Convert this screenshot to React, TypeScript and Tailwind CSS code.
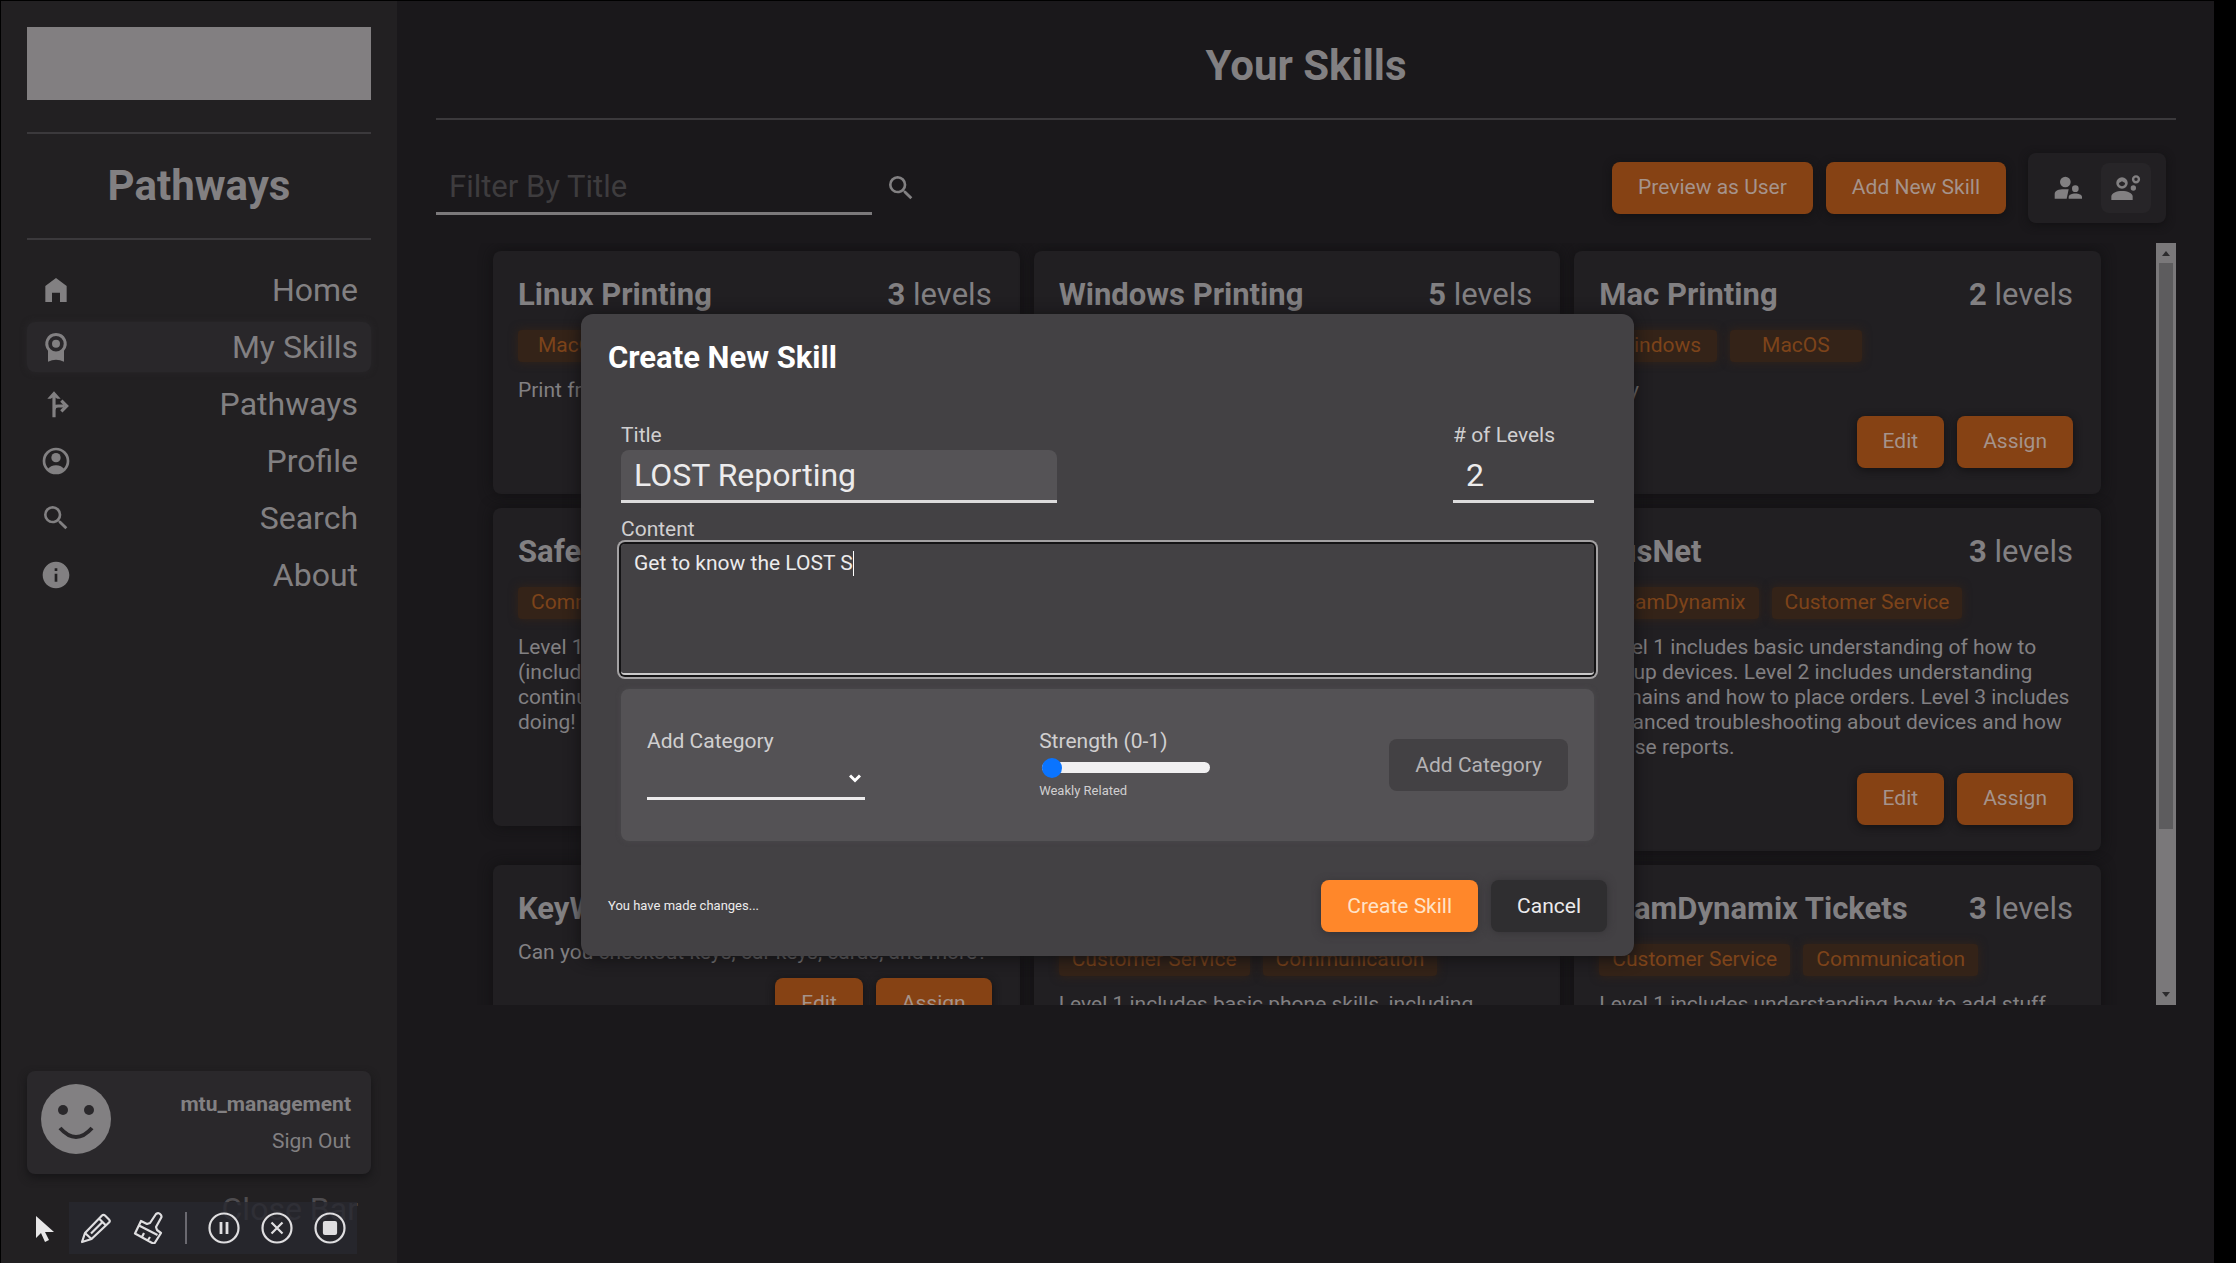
import { useId } from "react";
import type { ReactNode } from "react";
import { MdHomeFilled, MdInfo, MdSearch } from "react-icons/md";

type Tag = { name: string; className?: string };
type Skill = { title: string; levels: number; tags: Tag[]; text: string };

const skills: Skill[] = [
  {
    title: "Linux Printing",
    levels: 3,
    tags: [{ name: "MacOS", className: "px-5" }],
    text: "Print from Linux",
  },
  { title: "Windows Printing", levels: 5, tags: [{ name: "Windows" }], text: "Print from Windows" },
  {
    title: "Mac Printing",
    levels: 2,
    tags: [
      { name: "Windows", className: "px-4" },
      { name: "MacOS", className: "px-8" },
    ],
    text: "Tray",
  },
  {
    title: "Safety",
    levels: 3,
    tags: [{ name: "Communication" }],
    text: "Level 1 includes basic understanding of safety (including reporting issues). Level 2 includes continued practice. Keep up everything you are doing!",
  },
  {
    title: "Phones",
    levels: 3,
    tags: [{ name: "Customer Service" }],
    text: "Level 1 includes basic phone skills.",
  },
  {
    title: "BusNet",
    levels: 3,
    tags: [{ name: "TeamDynamix" }, { name: "Customer Service" }],
    text: "Level 1 includes basic understanding of how to set\u00a0up devices. Level 2 includes understanding domains and how to place orders. Level 3 includes advanced troubleshooting about devices and how to use reports.",
  },
  { title: "KeyWatcher", levels: 3, tags: [], text: "Can you checkout keys, car keys, cards, and more?" },
  {
    title: "Phone Skills",
    levels: 3,
    tags: [{ name: "Customer Service" }, { name: "Communication" }],
    text: "Level 1 includes basic phone skills, including answering and transferring calls.",
  },
  {
    title: "TeamDynamix Tickets",
    levels: 3,
    tags: [{ name: "Customer Service" }, { name: "Communication" }],
    text: "Level 1 includes understanding how to add stuff throughout tickets and how to resolve them.",
  },
];

function BadgeIcon() {
  return (
    <svg viewBox="0 0 24 24" className="size-8" fill="currentColor" aria-hidden="true">
      <path
        fillRule="evenodd"
        d="M12 1.500a8 8 0 0 0-6 13.300V23q3-1.500 6-1.500t6 1.500v-8.200A8 8 0 0 0 12 1.500zm0 2.200a5.800 5.800 0 1 1 0 11.600 5.800 5.800 0 0 1 0-11.600z"
      />
      <circle cx="12" cy="9.500" r="3" />
    </svg>
  );
}

function ForkIcon() {
  return (
    <svg viewBox="0 0 24 24" className="size-8" fill="none" stroke="currentColor" strokeWidth="2.400" aria-hidden="true">
      <path d="M10.500 22V5M10.500 18v-1.500q0-3 3-3H18" />
      <path d="M16 9.500l4 4-4 4" />
      <path d="M10.500 2.500l5 5.500h-2.500L10.500 6.500 8 8H5.500z" fill="currentColor" stroke="none" />
    </svg>
  );
}

function AccountIcon() {
  return (
    <svg viewBox="0 0 24 24" className="size-8" aria-hidden="true">
      <circle cx="12" cy="12" r="9" fill="none" stroke="currentColor" strokeWidth="2" />
      <circle cx="12" cy="9.500" r="3.500" fill="currentColor" />
      <path d="M5.500 18.500c1.500-2.300 4-3.300 6.500-3.300s5 1 6.500 3.300A9.500 9.500 0 0 1 12 21.500a9.500 9.500 0 0 1-6.500-3z" fill="currentColor" />
    </svg>
  );
}

function UsersIcon() {
  return (
    <svg viewBox="0 0 24 24" className="size-8" fill="currentColor" aria-hidden="true">
      <circle cx="10" cy="7.500" r="4" />
      <path d="M2 20v-3.500C2 14 5 13 9 13h3.500L11 20z" />
      <circle cx="17.500" cy="12.500" r="2.500" />
      <path d="M12.500 20v-1.200c0-1.700 2.500-2.600 5-2.600s5 .9 5 2.600V20z" />
    </svg>
  );
}

function ManagerIcon() {
  return (
    <svg viewBox="0 0 24 24" className="size-8" fill="currentColor" aria-hidden="true">
      <path d="M1 21v-2.600c0-2.700 4-4.200 8-4.200s8 1.500 8 4.200V21z" />
      <path fillRule="evenodd" d="M9 4a4.300 4.300 0 1 0 0 8.600A4.300 4.300 0 0 0 9 4zm-2.300 4.300L9 7l2.300 1.300a2.300 2.300 0 0 1-4.600 0z" />
      <circle cx="19.500" cy="5.500" r="2.200" fill="none" stroke="currentColor" strokeWidth="1.800" />
      <circle cx="17.500" cy="12" r="2" />
    </svg>
  );
}

function PrimaryButton({ children }: { children: ReactNode }) {
  return (
    <button
      type="button"
      className="h-[52px] rounded-lg bg-[#864214] px-[26px] text-[21px] text-[#a5938b] shadow-[0_2px_8px_#121113]"
    >
      {children}
    </button>
  );
}

function NavItem({ icon, label, active = false }: { icon: ReactNode; label: string; active?: boolean }) {
  return (
    <a
      href="#"
      className={
        active
          ? "flex h-[50px] items-center justify-between rounded-lg bg-[#29272a] px-[13px] shadow-[0_0_6px_#29272a]"
          : "flex h-[50px] items-center justify-between px-[13px]"
      }
    >
      {icon}
      <span>{label}</span>
    </a>
  );
}

function Sidebar() {
  return (
    <aside className="flex w-[396px] shrink-0 flex-col bg-[#222022] px-[26px] pt-[26px] text-[#828082]">
      <div className="h-[73px] bg-[#827f81]" />
      <div className="mt-8 border-y-2 border-[#3b393c] py-7 text-center">
        <h2 className="text-[42px] leading-[48px] font-bold">Pathways</h2>
      </div>
      <nav className="mt-[25px] flex flex-col gap-[7px] text-[32px]">
        <NavItem icon={<MdHomeFilled className="size-8" />} label="Home" />
        <NavItem icon={<BadgeIcon />} label="My Skills" active />
        <NavItem icon={<ForkIcon />} label="Pathways" />
        <NavItem icon={<AccountIcon />} label="Profile" />
        <NavItem icon={<MdSearch className="size-8" />} label="Search" />
        <NavItem icon={<MdInfo className="size-8" />} label="About" />
      </nav>
      <div className="mt-auto flex h-[103px] justify-between rounded-lg bg-[#2a282b] pt-[13px] pr-5 pl-[14px] shadow-[0_4px_8px_#161517]">
        <svg viewBox="0 0 70 70" className="size-[70px]" aria-hidden="true">
          <circle cx="35" cy="35" r="35" fill="#828082" />
          <circle cx="22" cy="26" r="5" fill="#2a282b" />
          <circle cx="48" cy="26" r="5" fill="#2a282b" />
          <path d="M19 44q16 18 32 0" fill="none" stroke="#2a282b" strokeWidth="4" />
        </svg>
        <div className="flex flex-col items-end gap-3 pt-2 text-[21px] leading-[25px]">
          <span className="font-bold">mtu_management</span>
          <button type="button">Sign Out</button>
        </div>
      </div>
      <button type="button" className="mt-[14px] mb-8 self-end pr-[13px] text-[32px] leading-[43px] text-[#4e4c4f]">
        Close Bar
      </button>
    </aside>
  );
}

function SkillCard({ skill }: { skill: Skill }) {
  return (
    <article className="flex flex-col gap-[13px] rounded-lg bg-[#211f22] py-[26px] pr-7 pl-[25px] shadow-[0_0_14px_#111012]">
      <div className="flex justify-between text-[31px] leading-9">
        <h3 className="font-bold">{skill.title}</h3>
        <p>
          <b>{skill.levels}</b> levels
        </p>
      </div>
      {skill.tags.length > 0 && (
        <ul className="flex h-[39px] items-center gap-[13px] text-[21px] text-[#7d431a]">
          {skill.tags.map((tag) => (
            <li
              key={tag.name}
              className={`flex h-8 items-center rounded bg-[#342318] shadow-[0_0_10px_#342318] ${tag.className ?? "px-[13px]"}`}
            >
              {tag.name}
            </li>
          ))}
        </ul>
      )}
      <p className="text-[21px] leading-[25px]">{skill.text}</p>
      <div className="flex justify-end gap-[13px]">
        <PrimaryButton>Edit</PrimaryButton>
        <PrimaryButton>Assign</PrimaryButton>
      </div>
    </article>
  );
}

function Scrollbar() {
  return (
    <div className="flex w-5 shrink-0 flex-col items-center bg-[#7a787a] text-[#2c2b2d]">
      <svg viewBox="0 0 20 20" className="size-5" fill="currentColor" aria-hidden="true">
        <path d="M6 13l4-5 4 5z" />
      </svg>
      <div className="w-[14px] flex-1 bg-[#5d5c5e]" />
      <div className="h-[156px]" />
      <svg viewBox="0 0 20 20" className="size-5" fill="currentColor" aria-hidden="true">
        <path d="M6 7l4 5 4-5z" />
      </svg>
    </div>
  );
}

function SkillsPage() {
  return (
    <main className="flex min-w-0 flex-1 flex-col bg-[#1a181b] pr-[38px] pl-[39px] text-[#828082]">
      <h1 className="mt-[41px] text-center text-[42px] leading-[48px] font-bold">Your Skills</h1>
      <hr className="mt-7 border-t-2 border-[#3b393c]" />
      <div className="mt-[33px] flex h-[70px] items-center">
        <input
          aria-label="Filter By Title"
          placeholder="Filter By Title"
          className="h-[54px] w-[436px] border-b-[3px] border-[#7b797b] px-[13px] text-[31px] outline-none placeholder:text-[#3e3c3e]"
        />
        <button type="button" aria-label="Search" className="ml-[13px]">
          <MdSearch className="size-8" />
        </button>
        <div className="ml-auto flex items-center gap-[13px]">
          <PrimaryButton>Preview as User</PrimaryButton>
          <PrimaryButton>Add New Skill</PrimaryButton>
          <div className="mr-[10px] ml-[9px] flex h-[70px] items-center gap-2 rounded-lg bg-[#211f22] px-[15px] shadow-[0_2px_8px_#121113]">
            <button type="button" aria-label="Users" className="grid size-[50px] place-items-center">
              <UsersIcon />
            </button>
            <button type="button" aria-label="Managers" className="grid size-[50px] place-items-center rounded-lg bg-[#272528]">
              <ManagerIcon />
            </button>
          </div>
        </div>
      </div>
      <div className="mt-5 flex h-[762px]">
        <div className="grid flex-1 grid-cols-3 content-start items-start gap-[14px] overflow-hidden pt-2 pr-[55px] pl-[57px]">
          {skills.map((skill) => (
            <SkillCard key={skill.title} skill={skill} />
          ))}
        </div>
        <Scrollbar />
      </div>
    </main>
  );
}

function CreateSkillDialog() {
  const id = useId();
  return (
    <div
      role="dialog"
      aria-labelledby={`${id}-heading`}
      className="absolute top-[313px] left-[580px] w-[1053px] rounded-xl bg-[#434144] px-[27px] pt-[26px] pb-6 text-[21px] leading-[25px] text-[#d0cfd0] shadow-[0_2px_16px_#111012]"
    >
      <h2 id={`${id}-heading`} className="text-[31px] leading-9 font-bold text-white">
        Create New Skill
      </h2>
      <div className="mt-[47px] px-[13px]">
        <div className="flex justify-between">
          <div className="flex flex-col gap-[2px]">
            <label htmlFor={`${id}-title`}>Title</label>
            <input
              id={`${id}-title`}
              defaultValue="LOST Reporting"
              className="h-[53px] w-[436px] rounded-t-lg border-b-[3px] border-[#dddcdd] bg-[#555356] px-[13px] text-[32px] text-[#ecebec] outline-none"
            />
          </div>
          <div className="flex flex-col gap-[2px]">
            <label htmlFor={`${id}-levels`}># of Levels</label>
            <input
              id={`${id}-levels`}
              defaultValue="2"
              className="h-[53px] w-[141px] border-b-[3px] border-[#dddcdd] px-[13px] text-[32px] text-[#ecebec] outline-none"
            />
          </div>
        </div>
        <label htmlFor={`${id}-content`} className="mt-[14px] block">
          Content
        </label>
        <div className="relative mt-[2px]">
          <textarea
            id={`${id}-content`}
            defaultValue="Get to know the LOST S"
            className="block h-[131px] w-full resize-none rounded border-b-2 border-[#c9c8c9] px-[13px] py-[7px] text-[#ecebec] shadow-[0_0_0_2px_#141315,0_0_0_4px_#a3a1a3] outline-none"
          />
          <span className="absolute top-[7px] left-[232px] h-[25px] w-px bg-white" />
        </div>
        <div className="mt-[14px] flex h-[152px] items-start justify-between rounded-lg bg-[#545255] px-[26px] pt-10 shadow-[0_0_5px_#4b494c]">
          <div className="flex w-[218px] flex-col">
            <label htmlFor={`${id}-category`}>Add Category</label>
            <div className="relative">
              <select
                id={`${id}-category`}
                className="h-[46px] w-full appearance-none border-b-[3px] border-[#ecebec] outline-none"
              >
                <option value="" />
                <option>Customer Service</option>
              </select>
              <svg
                viewBox="0 0 12 9"
                className="pointer-events-none absolute top-5 right-1 h-[9px] w-3"
                fill="none"
                stroke="white"
                strokeWidth="3"
                aria-hidden="true"
              >
                <path d="M1 1.500l5 5 5-5" />
              </svg>
            </div>
          </div>
          <div className="flex w-[176px] flex-col">
            <label htmlFor={`${id}-strength`}>Strength (0-1)</label>
            <input
              id={`${id}-strength`}
              type="range"
              min="0"
              max="1"
              step="0.1"
              defaultValue="0"
              className="mt-2 ml-[3px] h-[11px] w-[168px] appearance-none rounded-full bg-[#f1f0f1] [&::-webkit-slider-thumb]:size-5 [&::-webkit-slider-thumb]:appearance-none [&::-webkit-slider-thumb]:rounded-full [&::-webkit-slider-thumb]:bg-[#0a74ff]"
            />
            <span className="mt-[10px] text-[13px] leading-4">Weakly Related</span>
          </div>
          <button type="button" className="mt-[10px] h-[52px] rounded-lg bg-[#434144] px-[26px] text-[#b5b3b5]">
            Add Category
          </button>
        </div>
      </div>
      <div className="mt-[39px] flex items-center">
        <p className="mr-auto text-[13px] leading-4 text-[#ecebec]">You have made changes...</p>
        <button
          type="button"
          className="h-[52px] rounded-lg bg-[#ff872a] px-[26px] text-[#ffe3c8] shadow-[0_2px_8px_#343235]"
        >
          Create Skill
        </button>
        <button
          type="button"
          className="ml-[13px] h-[52px] rounded-lg bg-[#2f2e30] px-[26px] text-[#ecebec] shadow-[0_0_8px_#343235]"
        >
          Cancel
        </button>
      </div>
    </div>
  );
}

function RecorderBar() {
  return (
    <div className="absolute bottom-[9px] left-[68px] flex h-[52px] w-[288px] items-center bg-[#28282f]/80 pl-[11px] text-[#dfdee0]">
      <button type="button" aria-label="Draw">
        <svg viewBox="0 0 32 32" className="size-8" fill="none" stroke="currentColor" strokeWidth="2.200" strokeLinejoin="round">
          <path d="M2 30l3-9L22 3.500q1.500-1.500 3 0l4 4q1.500 1.500 0 3L11.500 27zM5 21l6.500 6M19 6.500l7 7M23 9.500L11 21.500" />
        </svg>
      </button>
      <button type="button" aria-label="Clear" className="ml-[21px]">
        <svg viewBox="0 0 32 32" className="size-8" fill="none" stroke="currentColor" strokeWidth="2.200" strokeLinejoin="round">
          <path d="M8 9l6 3 3-1 6-9q3-2 5 1 1 2 0 3l-5 9 1 3 4 3-7 11L2 21.500zM6 13.500l18.500 9.500M9 25l2-4M15 28l2-3" />
        </svg>
      </button>
      <span className="ml-5 h-8 w-0.5 bg-[#6a6970]" />
      <button type="button" aria-label="Pause" className="ml-[21px]">
        <svg viewBox="0 0 32 32" className="size-8" fill="none" stroke="currentColor" strokeWidth="2.200">
          <circle cx="16" cy="16" r="14.500" />
          <path d="M13 10v12M19 10v12" strokeWidth="2.800" />
        </svg>
      </button>
      <button type="button" aria-label="Discard" className="ml-[21px]">
        <svg viewBox="0 0 32 32" className="size-8" fill="none" stroke="currentColor" strokeWidth="2.200">
          <circle cx="16" cy="16" r="14.500" />
          <path d="M10.500 10.500l11 11M21.500 10.500l-11 11" />
        </svg>
      </button>
      <button type="button" aria-label="Stop" className="ml-[21px]">
        <svg viewBox="0 0 32 32" className="size-8" fill="none" stroke="currentColor" strokeWidth="2.200">
          <circle cx="16" cy="16" r="14.500" />
          <rect x="10" y="10" width="12" height="12" rx="1" fill="currentColor" />
        </svg>
      </button>
    </div>
  );
}

export default function App() {
  return (
    <div className="relative flex min-h-screen border-t border-l border-black bg-black pr-[22px] font-[Roboto,sans-serif]">
      <Sidebar />
      <SkillsPage />
      <CreateSkillDialog />
      <RecorderBar />
      <svg viewBox="0 0 18 26" className="absolute bottom-[21px] left-[35px] h-[26px] w-[18px]" fill="#e8e7e8" aria-hidden="true">
        <path d="M0 0v22l5-5 4 9 4-2-4-8h9z" />
      </svg>
    </div>
  );
}
